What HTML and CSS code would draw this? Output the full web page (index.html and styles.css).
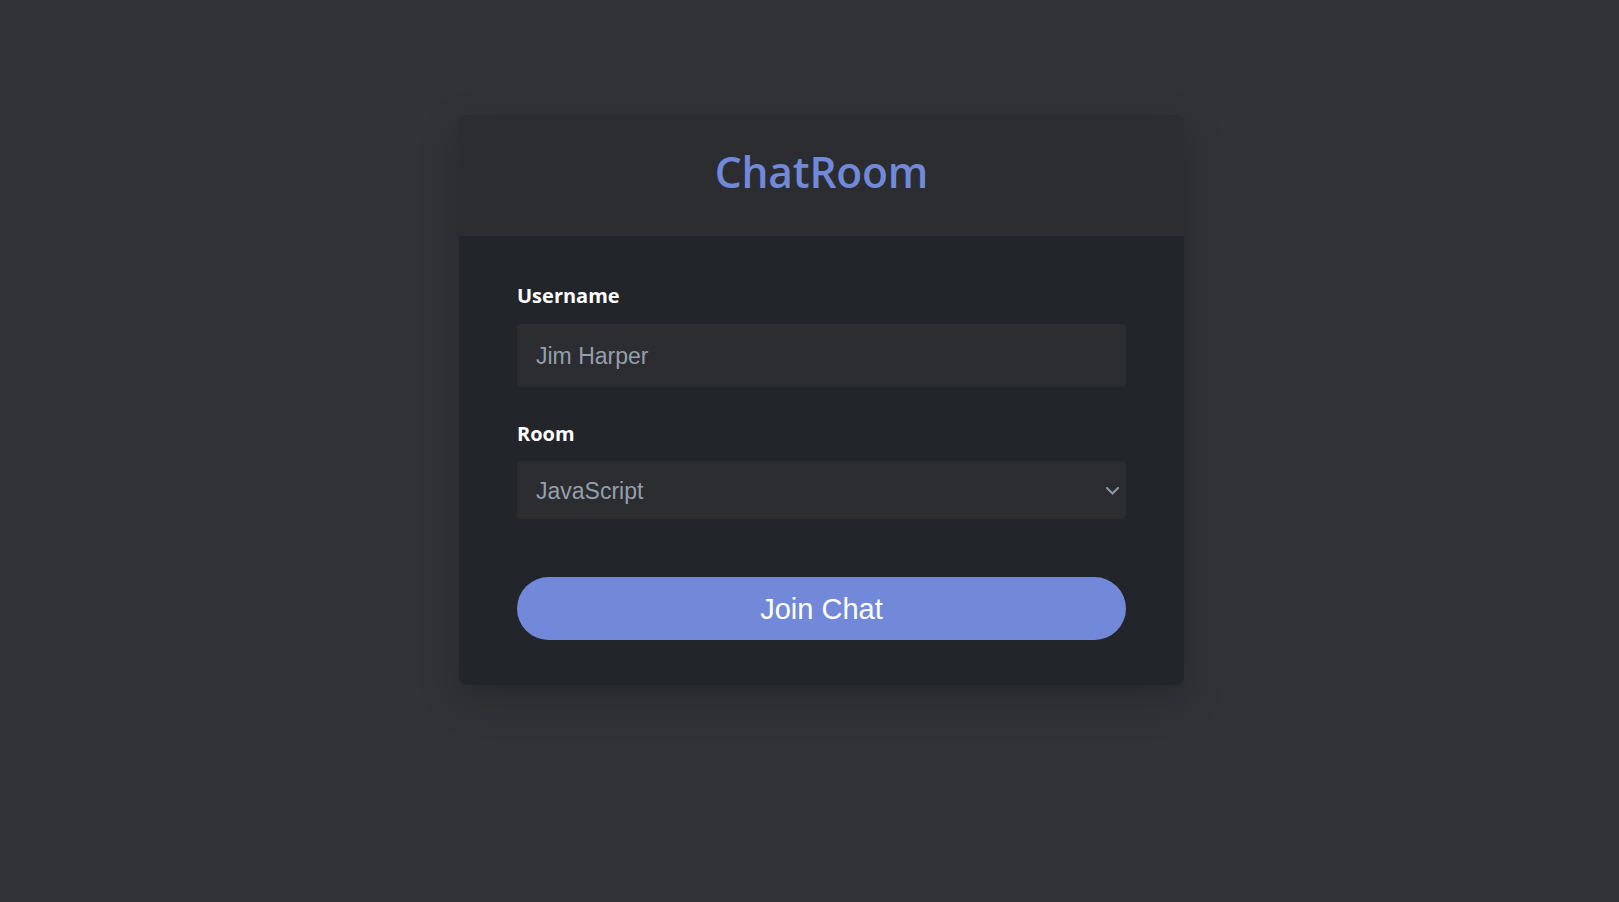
FILE: index.html
```html
<!DOCTYPE html>
<html lang="en">
<head>
<meta charset="utf-8">
<title>ChatRoom</title>
<link rel="stylesheet" href="styles.css">
</head>
<body>
<main class="page">
  <div class="card">
    <header class="card-header">
      <h1 class="title">ChatRoom</h1>
    </header>
    <form class="card-body">
      <label class="label" for="username">Username</label>
      <input class="field" id="username" type="text" value="Jim Harper">
      <label class="label label-room" for="room">Room</label>
      <div class="select-wrap">
        <select class="field select" id="room">
          <option>JavaScript</option>
          <option>Python</option>
          <option>PHP</option>
          <option>C#</option>
          <option>Ruby</option>
          <option>Java</option>
        </select>
        <svg class="chevron" width="13" height="8" viewBox="0 0 13 8" aria-hidden="true">
          <path d="M1 1 L6.5 6.5 L12 1" fill="none" stroke="#8b97a3" stroke-width="2" stroke-linecap="square"/>
        </svg>
      </div>
      <button class="btn" type="button">Join Chat</button>
    </form>
  </div>
</main>
</body>
</html>
```

FILE: styles.css
```css
* { box-sizing: border-box; }

html, body {
  margin: 0;
  padding: 0;
  height: 100%;
}

body {
  background: #313338;
  font-family: "Open Sans", "Noto Sans", sans-serif;
  color: #fff;
}

.page {
  display: flex;
  justify-content: center;
  padding: 115px 0 0 24px;
}

.card {
  width: 725px;
  border-radius: 8px;
  overflow: hidden;
  background: #222529;
  box-shadow: 0 14px 40px rgba(0, 0, 0, 0.22);
}

.card-header {
  height: 121px;
  background: #2b2d31;
  display: flex;
  align-items: center;
  justify-content: center;
  padding-bottom: 6px;
}

.title {
  margin: 0;
  font-family: "Open Sans", sans-serif;
  font-weight: 600;
  font-size: 42.5px;
  line-height: 1;
  color: #7289da;
  letter-spacing: -0.2px;
}

.card-body {
  display: flex;
  flex-direction: column;
  padding: 46px 58px 45px 58px;
  margin: 0;
}

.label {
  font-family: "Open Sans", sans-serif;
  font-weight: 700;
  font-size: 20px;
  line-height: 27px;
  color: #fff;
  margin-bottom: 15px;
}

.label-room {
  margin-top: 33px;
  margin-bottom: 14px;
}

.field {
  width: 100%;
  height: 63px;
  border: none;
  border-radius: 4px;
  background: #2b2d31;
  color: #949fab;
  font-family: "Liberation Sans", Arial, sans-serif;
  font-size: 23px;
  padding: 2px 19px 0 19px;
  outline: none;
}

.select-wrap {
  position: relative;
}

.select {
  height: 58px;
  appearance: none;
  -webkit-appearance: none;
  padding: 1px 40px 0 19px;
  display: block;
}

.chevron {
  position: absolute;
  right: 7px;
  top: 26px;
  pointer-events: none;
}

.btn {
  margin-top: 58px;
  height: 63px;
  width: 100%;
  border: none;
  border-radius: 32px;
  background: #7289da;
  color: #fff;
  font-family: "Liberation Sans", Arial, sans-serif;
  font-size: 29px;
  padding-top: 2px;
  cursor: pointer;
}
```
